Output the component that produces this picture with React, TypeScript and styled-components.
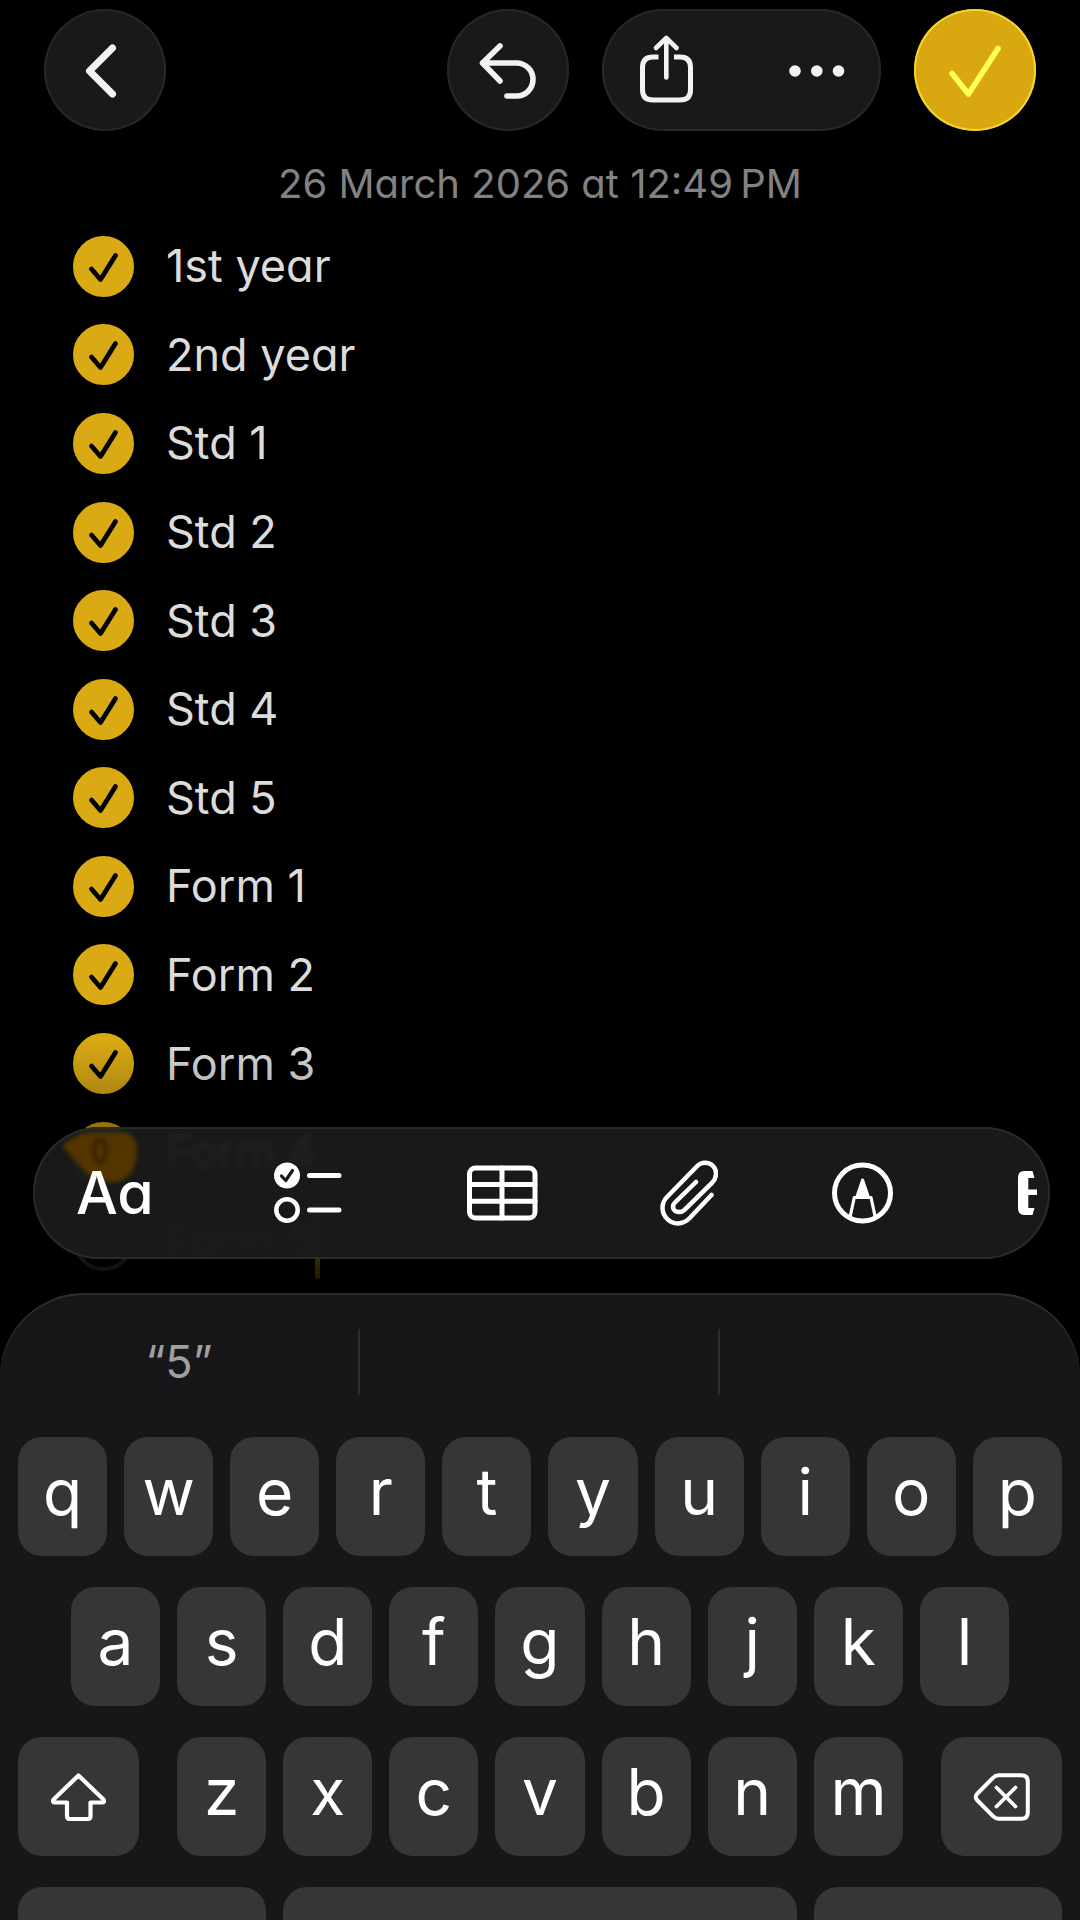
import React from "react";
import styled, { createGlobalStyle, css } from "styled-components";

const GlobalStyle = createGlobalStyle`
  *, *::before, *::after { box-sizing: border-box; }
  body {
    margin: 0;
    background: #000;
    font-family: Inter, "Liberation Sans", sans-serif;
  }
  button {
    margin: 0;
    padding: 0;
    border: 0;
    background: none;
    color: inherit;
    font: inherit;
  }
  svg { display: block; }
`;

const Screen = styled.div`
  display: flex;
  flex-direction: column;
  height: 100vh;
  overflow: hidden;
  background: #000;
`;

/* ---------- Note ---------- */

const Note = styled.main`
  position: relative;
  flex: none;
  padding-bottom: 8px;
  font-feature-settings: "cv11";
`;

const Header = styled.header`
  display: flex;
  gap: 33px;
  padding: 9px 44px 0;
`;

const glass = css`
  height: 122px;
  border-radius: 61px;
  background: #191919;
  box-shadow: inset 0 0 0 2px #272727;
  color: #f2f2f2;
`;

const RoundButton = styled.button<{ $pushRight?: boolean }>`
  ${glass}
  width: 122px;
  margin-right: ${(p) => (p.$pushRight ? "auto" : "0")};
`;

const DoneButton = styled(RoundButton)`
  background: #d9a810;
  box-shadow: inset 0 0 0 2px #f3d62c;
  color: #ffff55;
`;

const ButtonGroup = styled.div`
  ${glass}
  display: flex;
  gap: 21px;
`;

const GroupButton = styled.button`
  width: 129px;
  height: 122px;
`;

const NoteDate = styled.time`
  display: block;
  padding: 27px 0 12px;
  color: #828284;
  font-size: 40px;
  line-height: 52px;
  text-align: center;
`;

const Checklist = styled.ul`
  display: grid;
  grid-auto-rows: 1fr;
  height: 1063px;
  margin: 0;
  padding: 0 73px;
  list-style: none;
`;

const Item = styled.li`
  display: flex;
  align-items: center;
`;

const ItemLabel = styled.label`
  display: flex;
  align-items: center;
  gap: 32px;
  color: #dcdcdc;
  font-size: 45px;
  line-height: 60px;
`;

const TickWrap = styled.span`
  position: relative;
  width: 61px;
  height: 61px;
`;

const TickBox = styled.input`
  appearance: none;
  display: block;
  width: 61px;
  height: 61px;
  margin: 0;
  border: 4px solid #6a6a6a;
  border-radius: 50%;

  &:checked {
    border-color: #daaa14;
    background: #daaa14;
  }
`;

const TickMark = styled.svg`
  position: absolute;
  inset: 0;
  pointer-events: none;
`;

const Caret = styled.span`
  width: 5px;
  height: 76px;
  border-radius: 3px;
  background: #ffe000;
`;

const Fade = styled.div`
  position: absolute;
  inset: auto 0 0;
  height: 254px;
  background: linear-gradient(rgba(0, 0, 0, 0), rgba(0, 0, 0, 0.93));
  pointer-events: none;
`;

/* ---------- Formatting bar ---------- */

const FormatBar = styled.div`
  position: absolute;
  inset: auto 30px 34px 33px;
  display: flex;
  align-items: center;
  gap: 114px;
  height: 132px;
  padding-left: 43px;
  overflow: hidden;
  border-radius: 66px;
  background: rgba(27, 27, 27, 0.92);
  backdrop-filter: blur(3px);
  box-shadow: inset 0 0 0 2px #2a2a2a;
  color: #fff;
`;

const FormatButton = styled.button<{ $width: number }>`
  position: relative;
  display: flex;
  flex: none;
  align-items: center;
  width: ${(p) => p.$width}px;
  height: 100%;
  font-size: 59px;
  font-weight: 500;
  line-height: 72px;
`;

const Refraction = styled.svg`
  position: absolute;
  top: 0;
  left: 0;
`;

/* ---------- Keyboard ---------- */

const Keyboard = styled.section`
  display: flex;
  flex: none;
  flex-direction: column;
  gap: 31px;
  padding: 0 18px 30px;
  border-radius: 84px 84px 0 0;
  background: #171719;
  box-shadow: inset 0 2px 0 #2e2e30;
  color: #fff;
`;

const Suggestions = styled.div`
  display: grid;
  grid-template-columns: repeat(3, 1fr);
  margin: 36px -18px 11px;
`;

const Suggestion = styled.button`
  height: 66px;
  color: #a0a0a2;
  font-size: 45px;
  line-height: 60px;

  &:not(:last-child) {
    border-right: 2px solid #2d2d2f;
  }
`;

const KeyRow = styled.div<{ $inset?: number; $gap?: number }>`
  display: flex;
  gap: ${(p) => p.$gap ?? 17}px;
  padding: 0 ${(p) => p.$inset ?? 0}px;
`;

const KeyGroup = styled.div`
  display: flex;
  flex: 1;
  gap: 17px;
`;

const Key = styled.button`
  flex: 1 1 0;
  min-width: 0;
  height: 119px;
  padding-bottom: 9px;
  border-radius: 24px;
  background: #363636;
  font-size: 64px;
  line-height: 78px;
`;

const ActionKey = styled(Key)<{ $width: number }>`
  display: flex;
  flex: 0 0 ${(p) => p.$width}px;
  align-items: center;
  justify-content: center;
  padding: 0;
`;

/* ---------- Icons ---------- */

const Stroke = ({
  w,
  h,
  width,
  children,
}: {
  w: number;
  h: number;
  width: number;
  children: React.ReactNode;
}) => (
  <svg
    width={w}
    height={h}
    viewBox={`0 0 ${w} ${h}`}
    fill="none"
    stroke="currentColor"
    strokeWidth={width}
    strokeLinecap="round"
    strokeLinejoin="round"
    aria-hidden="true"
  >
    {children}
  </svg>
);

const BackIcon = () => (
  <Stroke w={122} h={122} width={7}>
    <path d="M68.500 39 45.500 62 68.500 85" />
  </Stroke>
);

const UndoIcon = () => (
  <Stroke w={122} h={122} width={5.6}>
    <path d="M53 37 35.500 54 53 72M35.500 54H69.500a16.500 16.500 0 0 1 0 33H60" />
  </Stroke>
);

const ShareIcon = () => (
  <Stroke w={129} h={122} width={5}>
    <path
      strokeLinecap="butt"
      d="M56.500 48H51Q40.500 48 40.500 58.500V81Q40.500 91 51 91H78Q88.500 91 88.500 81V58.500Q88.500 48 78 48H72"
    />
    <path strokeWidth="4.600" d="M64.300 29V68.500M54 39 64.300 29 74.600 39" />
  </Stroke>
);

const MoreIcon = () => (
  <svg width="129" height="122" viewBox="0 0 129 122" fill="currentColor" aria-hidden="true">
    <circle cx="43" cy="62" r="5.800" />
    <circle cx="64.800" cy="62" r="5.800" />
    <circle cx="86.500" cy="62" r="5.800" />
  </svg>
);

const DoneIcon = () => (
  <Stroke w={122} h={122} width={5.6}>
    <path d="M38 64.500 54.500 85 84 39.500" />
  </Stroke>
);

const ChecklistIcon = () => (
  <Stroke w={68} h={62} width={5}>
    <circle cx="13" cy="13.500" r="13" fill="currentColor" stroke="none" />
    <path stroke="#191919" strokeWidth="3.200" d="M7.500 14 11.700 18.500 18.500 8.500" />
    <circle cx="13" cy="48" r="10.700" strokeWidth="4.500" />
    <path d="M35.500 13.500H65M35.500 48H65" />
  </Stroke>
);

const TableIcon = () => (
  <Stroke w={71} h={56} width={5}>
    <rect x="2.500" y="3" width="65.500" height="50" rx="6" />
    <path d="M3 19.500H68M3 36.200H68M35 3V53" />
  </Stroke>
);

const ClipIcon = () => (
  <Stroke w={58} h={66} width={4.5}>
    <path d="M51.500 35 29.500 58.300C25.500 62.500 21.500 63.400 17.700 63.400 9.500 63.400 2.500 56 2.500 48 2.500 43.500 4 40 7 37L36.500 6.800C39 4 42 2.800 45 2.800 51.500 2.800 56 7.300 56 13.300 56 17.300 54.500 20.300 52 22.800L24.500 49.800C20.500 53.500 13 52.500 13 46.500 13 45 13.700 43.800 15 42.500L36 22" />
  </Stroke>
);

const MarkupIcon = () => (
  <Stroke w={62} h={62} width={5}>
    <circle cx="30.500" cy="31" r="28" />
    <path fill="currentColor" strokeWidth="3" d="M30.600 18 25 34.500H36.200Z" />
    <path strokeWidth="3.200" d="M18.300 54 22.300 35.500H39L43 54" />
  </Stroke>
);

const AttachmentIcon = () => (
  <svg width="20" height="44" viewBox="0 0 20 44" fill="currentColor" aria-hidden="true">
    <path d="M6 0H14.500L16.500 7H10.300V18.500H19V24H10.300V37H16.500L14.500 44H6Q0 44 0 37V7Q0 0 6 0Z" />
  </svg>
);

const ShiftIcon = () => (
  <Stroke w={56} h={48} width={4.2}>
    <path d="M27.500 2.500 52.500 26.500Q54 29.500 51 29.500H39.500V43Q39.500 46 36.500 46H19Q16 46 16 43V29.500H4Q1 29.500 2.500 26.500Z" />
  </Stroke>
);

const DeleteIcon = () => (
  <Stroke w={57} h={48} width={4}>
    <path d="M25.500 2.300H48.500Q54.800 2.300 54.800 8.500V39.500Q54.800 45.700 48.500 45.700H25.500Q22.500 45.700 20 43.200L4 27Q1.500 24 4 21L20 4.800Q22.500 2.300 25.500 2.300Z" />
    <path strokeWidth="3.800" d="M23.500 14.500 42.500 33.500M42.500 14.500 23.500 33.500" />
  </Stroke>
);

/* ---------- Data ---------- */

const items = [
  { text: "1st year", done: true },
  { text: "2nd year", done: true },
  { text: "Std 1", done: true },
  { text: "Std 2", done: true },
  { text: "Std 3", done: true },
  { text: "Std 4", done: true },
  { text: "Std 5", done: true },
  { text: "Form 1", done: true },
  { text: "Form 2", done: true },
  { text: "Form 3", done: true },
  { text: "Form 4", done: true },
  { text: "Form 5", done: false, editing: true },
];

const letters = (row: string) => row.split("").map((c) => <Key key={c}>{c}</Key>);

export default function App() {
  return (
    <>
      <GlobalStyle />
      <Screen>
        <Note>
          <Header>
            <RoundButton $pushRight aria-label="Back">
              <BackIcon />
            </RoundButton>
            <RoundButton aria-label="Undo">
              <UndoIcon />
            </RoundButton>
            <ButtonGroup>
              <GroupButton aria-label="Share">
                <ShareIcon />
              </GroupButton>
              <GroupButton aria-label="More">
                <MoreIcon />
              </GroupButton>
            </ButtonGroup>
            <DoneButton aria-label="Done">
              <DoneIcon />
            </DoneButton>
          </Header>

          <NoteDate dateTime="2026-03-26T12:49">26 March 2026 at 12:49{"\u202f"}PM</NoteDate>

          <Checklist>
            {items.map((item) => (
              <Item key={item.text}>
                <ItemLabel>
                  <TickWrap>
                    <TickBox type="checkbox" defaultChecked={item.done} />
                    {item.done && (
                      <TickMark
                        viewBox="0 0 61 61"
                        fill="none"
                        stroke="#000"
                        strokeWidth="4.800"
                        strokeLinecap="round"
                        strokeLinejoin="round"
                        aria-hidden="true"
                      >
                        <path d="M18.500 33 27.500 43.500 42.500 19.500" />
                      </TickMark>
                    )}
                  </TickWrap>
                  {item.text}
                </ItemLabel>
                {item.editing && <Caret />}
              </Item>
            ))}
          </Checklist>
          <Fade />

          <FormatBar role="toolbar" aria-label="Formatting">
            <Refraction width="120" height="70" viewBox="0 0 120 70" aria-hidden="true">
              <g style={{ filter: "blur(2px)" }}>
                <path
                  fill="#533500"
                  d="M29 19Q40 8 56 6H92Q103 8 104 22Q104 50 84 55Q66 57 54 46Q42 34 29 19Z"
                />
                <ellipse cx="67" cy="24" rx="6" ry="11" fill="none" stroke="#2f2100" strokeWidth="4" />
              </g>
            </Refraction>
            <FormatButton $width={84}>Aa</FormatButton>
            <FormatButton $width={79} aria-label="Checklist">
              <ChecklistIcon />
            </FormatButton>
            <FormatButton $width={79} aria-label="Table">
              <TableIcon />
            </FormatButton>
            <FormatButton $width={58} aria-label="Attach">
              <ClipIcon />
            </FormatButton>
            <FormatButton $width={72} aria-label="Markup">
              <MarkupIcon />
            </FormatButton>
            <FormatButton $width={20} aria-label="More tools">
              <AttachmentIcon />
            </FormatButton>
          </FormatBar>
        </Note>

        <Keyboard aria-label="Keyboard">
          <Suggestions>
            <Suggestion>“5”</Suggestion>
            <Suggestion aria-label="Second suggestion" />
            <Suggestion aria-label="Third suggestion" />
          </Suggestions>
          <KeyRow>{letters("qwertyuiop")}</KeyRow>
          <KeyRow $inset={53}>{letters("asdfghjkl")}</KeyRow>
          <KeyRow $gap={38}>
            <ActionKey $width={121} aria-label="Shift">
              <ShiftIcon />
            </ActionKey>
            <KeyGroup>{letters("zxcvbnm")}</KeyGroup>
            <ActionKey $width={121} aria-label="Delete">
              <DeleteIcon />
            </ActionKey>
          </KeyRow>
          <KeyRow>
            <ActionKey $width={248} aria-label="Numbers" />
            <Key aria-label="Space" />
            <ActionKey $width={248} aria-label="Return" />
          </KeyRow>
        </Keyboard>
      </Screen>
    </>
  );
}
